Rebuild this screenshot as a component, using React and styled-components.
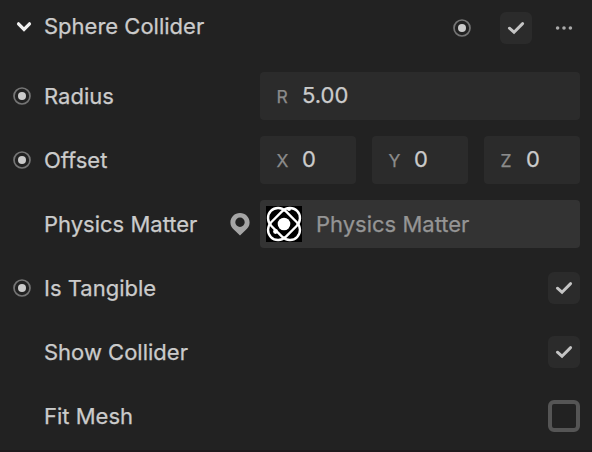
import React from 'react';
import styled, {createGlobalStyle} from 'styled-components'


const GlobalStyle = createGlobalStyle`
  body {
    margin: 0;
    background-color: #222222;
  }
`

const Panel = styled.div`
  width: 592px;
  height: 452px;
  box-sizing: border-box;
  padding-right: 12px;
  overflow: hidden;
  background-color: #222222;
  border-bottom: 2px solid #1f1a1d;
  color: #cbcbcb;
  font-family: Inter, "Liberation Sans", sans-serif;
  font-size: 22px;
  font-variant-ligatures: none;
  line-height: 32px;
  -webkit-text-stroke: 0.25px currentColor;
`

const Header = styled.div`
  display: flex;
  align-items: center;
  height: 56px;
  margin-bottom: 8px;
`

const Row = styled.div`
  display: flex;
  align-items: center;
  height: 64px;
`

const Gutter = styled.div`
  display: flex;
  justify-content: center;
  width: 44px;
  flex: none;
`

const Label = styled.div`
  flex: 1;
  white-space: nowrap;
`

const Title = styled(Label)`
  padding-bottom: 4px;
`

const Toggle = styled(Gutter)`
  box-sizing: border-box;
  padding-left: 4px;
  padding-bottom: 3px;
`

const Actions = styled.div`
  display: flex;
  align-items: center;
`

const KeyButton = styled.div`
  display: flex;
  margin-right: 29px;
`

const MoreButton = styled.div`
  display: flex;
  margin-left: 16px;
`

const Fields = styled.div`
  display: flex;
  gap: 16px;
  width: 320px;
  flex: none;
`

const Field = styled.div`
  display: flex;
  align-items: center;
  flex: 1;
  height: 48px;
  box-sizing: border-box;
  padding-left: ${props => props.$asset ? '6px' : '16.5px'};
  border-radius: 4px;
  background-color: ${props => props.$asset ? '#333333' : '#2b2b2b'};
`

const Axis = styled.span`
  width: 25.5px;
  padding-top: 2px;
  color: #8b8b8b;
  font-size: 17.5px;
`

const Value = styled.span`
  padding-bottom: 2px;
`

const AssetName = styled.span`
  margin-left: 14px;
  color: #959595;
`

const PinSlot = styled.div`
  display: flex;
  margin-right: 10px;
`

const Box = styled.div`
  display: flex;
  align-items: center;
  justify-content: center;
  width: 32px;
  height: 32px;
  box-sizing: border-box;
  border-radius: 6px;
  background-color: ${props => props.$checked ? '#2b2b2b' : 'transparent'};
  border: ${props => props.$checked ? 'none' : '4px solid #555555'};
`

function Keyframe(){
  return (
    <svg width="18" height="18" viewBox="0 0 18 18">
      <circle cx="9" cy="9" r="8" fill="none" stroke="#757575" strokeWidth="1.7" />
      <circle cx="9" cy="9" r="4" fill="#cbcbcb" />
    </svg>
  )
}

function Chevron(){
  return (
    <svg width="16" height="12" viewBox="0 0 16 12">
      <path d="M2.5 2.8L8 8.4L13.5 2.8" fill="none" stroke="#f0f0f0" strokeWidth="3.2" strokeLinecap="round" />
    </svg>
  )
}

function Dots(){
  return (
    <svg width="32" height="32" viewBox="0 0 32 32">
      <circle cx="9.6" cy="16" r="1.8" fill="#aaaaaa" />
      <circle cx="16" cy="16" r="1.8" fill="#aaaaaa" />
      <circle cx="22.4" cy="16" r="1.8" fill="#aaaaaa" />
    </svg>
  )
}

function Pin(){
  return (
    <svg width="20" height="24" viewBox="0 0 20 24">
      <path
        fill="#a5a5a5"
        fillRule="evenodd"
        d="M10 1C4.6 1 0.4 5.2 0.4 10.4C0.4 14 2.2 16.2 4.8 18.4L10 23.6L15.2 18.4C17.8 16.2 19.6 14 19.6 10.4C19.6 5.2 15.4 1 10 1ZM10 5.6A4.7 4.7 0 1 1 10 15A4.7 4.7 0 1 1 10 5.6Z"
      />
    </svg>
  )
}

function Atom(){
  return (
    <svg width="36" height="36" viewBox="0 0 36 36">
      <rect width="36" height="36" fill="#000000" />
      <g fill="none" stroke="#ffffff" strokeWidth="2.4">
        <rect x="-0.5" y="7.7" width="37" height="20.6" rx="11" ry="10.3" transform="rotate(45 18 18)" />
        <rect x="-0.5" y="7.7" width="37" height="20.6" rx="11" ry="10.3" transform="rotate(-45 18 18)" />
      </g>
      <circle cx="18" cy="18" r="6.3" fill="#ffffff" />
      <circle cx="23" cy="3" r="2" fill="#ffffff" />
      <circle cx="9.5" cy="25.5" r="2.4" fill="#ffffff" />
    </svg>
  )
}

function Checkbox({checked}){
  return (
    <Box $checked={checked}>
      {checked &&
        <svg width="18" height="14" viewBox="0 0 18 14">
          <path d="M2.4 7.2L7 11.2L15.6 2.6" fill="none" stroke="#c4c4c4" strokeWidth="2.9" strokeLinecap="round" />
        </svg>
      }
    </Box>
  )
}

function Property({label, keyed, pin, children}){
  return (
    <Row>
      <Gutter>{keyed && <Keyframe />}</Gutter>
      <Label>{label}</Label>
      {pin && <PinSlot><Pin /></PinSlot>}
      {children}
    </Row>
  )
}

export default function App(){
  return (
    <>
      <GlobalStyle />
      <Panel>
        <Header>
          <Toggle><Chevron /></Toggle>
          <Title>Sphere Collider</Title>
          <Actions>
            <KeyButton><Keyframe /></KeyButton>
            <Checkbox checked />
            <MoreButton><Dots /></MoreButton>
          </Actions>
        </Header>
        <Property label="Radius" keyed>
          <Fields>
            <Field><Axis>R</Axis><Value>5.00</Value></Field>
          </Fields>
        </Property>
        <Property label="Offset" keyed>
          <Fields>
            <Field><Axis>X</Axis><Value>0</Value></Field>
            <Field><Axis>Y</Axis><Value>0</Value></Field>
            <Field><Axis>Z</Axis><Value>0</Value></Field>
          </Fields>
        </Property>
        <Property label="Physics Matter" pin>
          <Fields>
            <Field $asset>
              <Atom />
              <AssetName>Physics Matter</AssetName>
            </Field>
          </Fields>
        </Property>
        <Property label="Is Tangible" keyed>
          <Checkbox checked />
        </Property>
        <Property label="Show Collider">
          <Checkbox checked />
        </Property>
        <Property label="Fit Mesh">
          <Checkbox />
        </Property>
      </Panel>
    </>
  )
}
